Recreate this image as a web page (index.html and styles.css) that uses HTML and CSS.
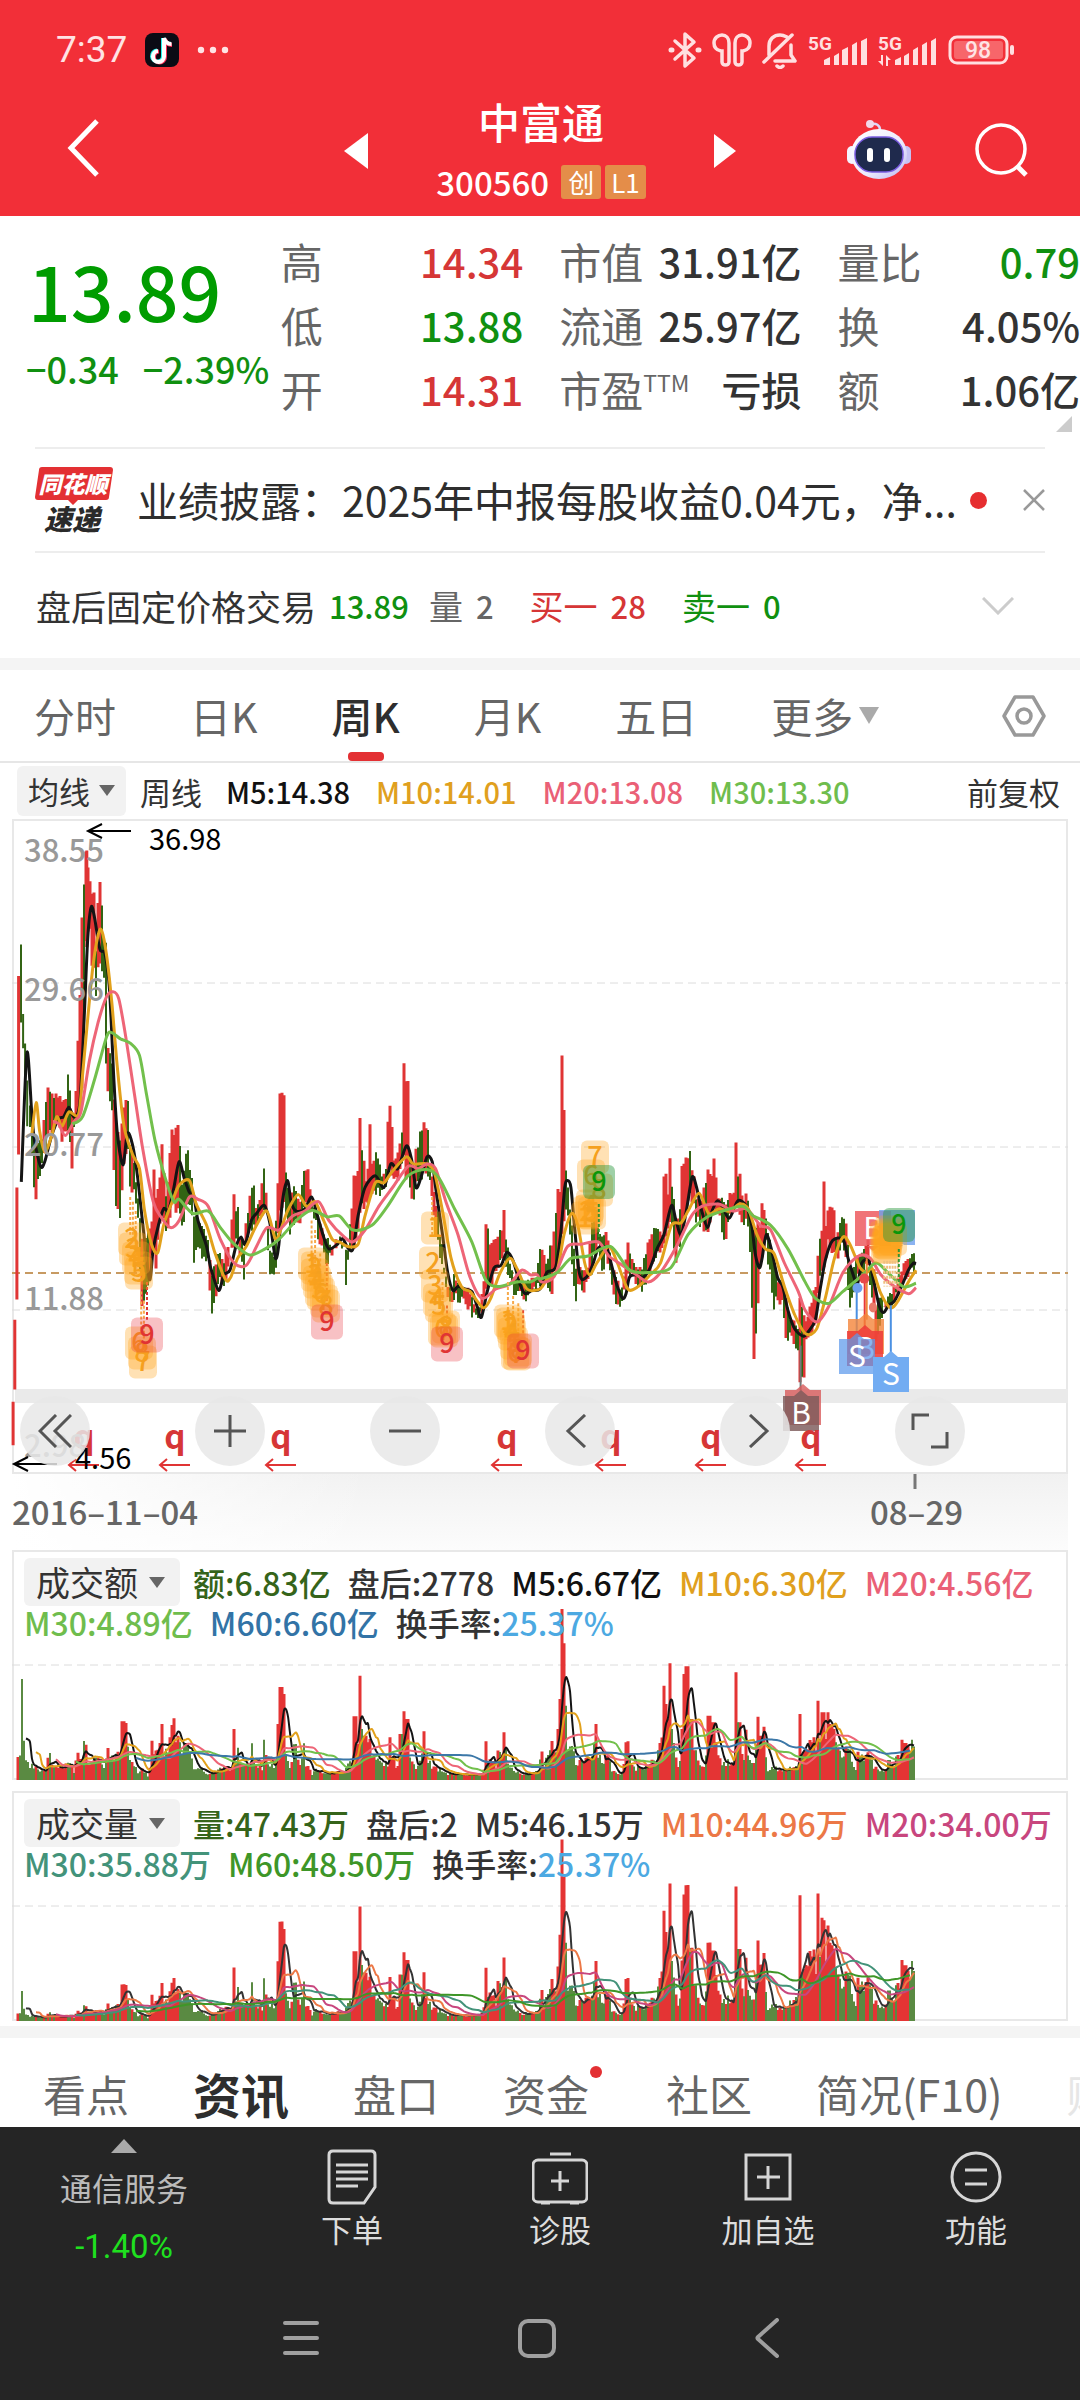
FILE: index.html
```html
<!DOCTYPE html>
<html lang="zh-CN">
<head>
<meta charset="utf-8">
<meta name="viewport" content="width=device-width, initial-scale=1">
<title>中富通 300560</title>
<link rel="stylesheet" href="styles.css">
</head>
<body>
<header class="top">
  <div class="status">
    <span class="clock">7:37</span>
    <svg class="ic" width="34" height="34" viewBox="0 0 34 34"><rect width="34" height="34" rx="8" fill="#0b0b14"/><g fill="none" stroke-width="4"><path d="M18 5v18a5.500 5.500 0 1 1-6-5.500M18 5c1 4 4 6 8 6" stroke="#25f4ee"/><path d="M20 6v18a5.500 5.500 0 1 1-6-5.500M20 6c1 4 4 6 7 6" stroke="#fe2c55"/><path d="M19 5v18.500a5.500 5.500 0 1 1-6-5.500M19 5c1 4 4 6 7.500 6" stroke="#fff"/></g></svg>
    <svg class="ic" width="32" height="8" viewBox="0 0 32 8" fill="#ffe3e4"><circle cx="4" cy="4" r="3.200"/><circle cx="16" cy="4" r="3.200"/><circle cx="28" cy="4" r="3.200"/></svg>
    <div class="status-right">
      <svg class="ic" width="34" height="38" viewBox="0 0 34 38" fill="none" stroke="#ffdfe0" stroke-width="3.500" stroke-linejoin="round" stroke-linecap="round"><path d="M7 10l19 17-9 8V3l9 8L7 28"/><path d="M3 19h1M30 19h1" stroke-width="5"/></svg>
      <svg class="ic" width="40" height="36" viewBox="0 0 40 36" fill="none" stroke="#ffdfe0" stroke-width="3.500"><path d="M9 19C4 18 2 15 2 11c0-5 4-8 8-8s7 3 7 8v19c0 4-7 4-7 0V19zM31 19c5-1 7-4 7-8 0-5-4-8-8-8s-7 3-7 8v19c0 4 7 4 7 0V19z"/></svg>
      <svg class="ic" width="36" height="38" viewBox="0 0 36 38" fill="none" stroke="#ffdfe0" stroke-width="3.500" stroke-linecap="round" stroke-linejoin="round"><path d="M7 24V15C7 8 12 4 18 4c3 0 5 1 7 2M29 14v10l4 6H13M2 31L30 4"/><path d="M15 35c2 2 4 2 6 0"/></svg>
      <svg class="ic" width="60" height="34" viewBox="0 0 60 34" fill="#ffdfe0"><text class="g5" x="0" y="17">5G</text><path d="M16 27l6-3v8h-6zM26 23l5-3v12h-5zM34 17l6-3v18h-6zM44 12l5-3v23h-5zM53 8l6-3v27h-6z"/></svg>
      <svg class="ic" width="60" height="34" viewBox="0 0 60 34" fill="#ffdfe0"><text class="g5" x="0" y="17">5G</text><path d="M17 27l6-3v8h-6zM26 23l5-3v12h-5zM35 17l5-3v18h-5zM44 12l5-3v23h-5zM53 8l5-3v27h-5zM3 22h2v11l-5-5h3zM8 33V22l5 5h-3v6z"/></svg>
      <svg class="ic" width="68" height="30" viewBox="0 0 68 30"><rect x="2" y="2" width="57" height="26" rx="7" fill="none" stroke="#ffdfe0" stroke-width="3"/><rect x="6" y="6" width="49" height="18" rx="3" fill="#f7666a"/><rect x="62" y="10" width="4" height="10" rx="2" fill="#ffdfe0"/><text class="batt" x="30" y="23">98</text></svg>
    </div>
  </div>
  <nav class="title-bar">
    <div class="bar-left"><button class="plain" aria-label="返回"><svg class="ic" width="34" height="60" viewBox="0 0 34 60" fill="none" stroke="#fff" stroke-width="5"><path d="M31 3L5 30l26 27"/></svg></button></div>
    <div class="bar-mid">
      <button class="plain" aria-label="上一只"><svg class="ic" width="24" height="36" viewBox="0 0 24 36" fill="#fff"><path d="M24 0v36L0 18z"/></svg></button>
      <div class="name">
        <h1>中富通</h1>
        <div class="code"><span>300560</span><span class="tag">创</span><span class="tag">L1</span></div>
      </div>
      <button class="plain" aria-label="下一只"><svg class="ic" width="22" height="34" viewBox="0 0 22 34" fill="#fff"><path d="M0 0v34l22-17z"/></svg></button>
    </div>
    <div class="bar-right">
      <button class="plain" aria-label="助手"><svg class="ic" width="64" height="60" viewBox="0 0 64 60">
        <defs><linearGradient id="hd" x1="0" y1="0" x2="1" y2="1"><stop offset="0" stop-color="#fff"/><stop offset=".6" stop-color="#eceafc"/><stop offset="1" stop-color="#b9b4f0"/></linearGradient></defs>
        <path d="M24 4c5-1 9 1 9 6" fill="none" stroke="#dcd9fa" stroke-width="2.500"/><circle cx="23" cy="4" r="4" fill="#f2d8ea"/>
        <rect x="0" y="26" width="10" height="18" rx="5" fill="#f5f3ff"/><rect x="54" y="26" width="10" height="18" rx="5" fill="#c6c2f4"/>
        <ellipse cx="32" cy="34" rx="28" ry="25" fill="url(#hd)"/>
        <rect x="8" y="17" width="48" height="35" rx="17" fill="#1f2a4d" stroke="#7a5ce0" stroke-width="1.500"/>
        <rect x="20" y="28" width="6" height="14" rx="3" fill="#fff"/><rect x="37" y="28" width="6" height="14" rx="3" fill="#fff"/></svg></button>
      <button class="plain" aria-label="搜索"><svg class="ic" width="54" height="56" viewBox="0 0 54 56" fill="none" stroke="#fff" stroke-width="3.500"><circle cx="26" cy="27" r="24"/><path d="M42 44l9 9" stroke-width="5"/></svg></button>
    </div>
  </nav>
</header>

<main>
  <section class="quote">
    <div class="price">
      <div class="last">13.89</div>
      <div class="chg"><span>−0.34</span><span>−2.39%</span></div>
    </div>
    <dl class="stats">
      <div><dt>高</dt><dd class="red">14.34</dd></div>
      <div><dt>市值</dt><dd>31.91亿</dd></div>
      <div><dt>量比</dt><dd class="green">0.79</dd></div>
      <div><dt>低</dt><dd class="green">13.88</dd></div>
      <div><dt>流通</dt><dd>25.97亿</dd></div>
      <div><dt>换</dt><dd>4.05%</dd></div>
      <div><dt>开</dt><dd class="red">14.31</dd></div>
      <div><dt>市盈<sup>TTM</sup></dt><dd>亏损</dd></div>
      <div><dt>额</dt><dd>1.06亿</dd></div>
    </dl>
    <svg class="corner" width="16" height="16" viewBox="0 0 16 16"><path d="M16 0v16H0z" fill="#ccc"/></svg>
  </section>

  <section class="news">
    <svg class="ic" width="78" height="66" viewBox="0 0 78 66"><path d="M7 0h68q3 0 3 3l-4 27q0 3-3 3H43l-5 5-5-5H3q-3 0-3-3L4 3q0-3 3-3z" fill="#e33033"/><text class="logo1" x="38" y="26">同花顺</text><text class="logo2" x="37" y="63">速递</text></svg>
    <a href="#news">业绩披露：2025年中报每股收益0.04元，净...</a>
    <i class="dot"></i>
    <button class="plain close" aria-label="关闭"><svg class="ic" width="22" height="22" viewBox="0 0 22 22" stroke="#999" stroke-width="2.500"><path d="M1 1l20 20M21 1L1 21"/></svg></button>
  </section>

  <section class="after">
    <span>盘后固定价格交易</span><b class="green">13.89</b>
    <span class="grp gray">量 <b>2</b></span>
    <span class="grp red">买一 <b>28</b></span>
    <span class="grp green">卖一 <b>0</b></span>
    <button class="plain more" aria-label="展开"><svg class="ic" width="32" height="18" viewBox="0 0 32 18" fill="none" stroke="#ccc" stroke-width="3"><path d="M1 1l15 15L31 1"/></svg></button>
  </section>

  <nav class="periods">
    <button>分时</button><button>日K</button><button class="on">周K</button><button>月K</button><button>五日</button>
    <button class="drop">更多<svg class="ic" width="20" height="17" viewBox="0 0 20 17" fill="#aaa"><path d="M0 0h20L10 17z"/></svg></button>
    <button class="gear" aria-label="设置"><svg class="ic" width="44" height="42" viewBox="0 0 44 42" fill="none" stroke="#999" stroke-width="3.500" stroke-linejoin="round"><path d="M13 2h18l11 19-11 19H13L2 21z"/><circle cx="22" cy="21" r="7"/></svg></button>
  </nav>

  <section class="legend">
    <label class="pick"><select aria-label="主图指标"><option>均线</option></select></label>
    <span class="dark">周线</span>
    <b class="c-k">M5:14.38</b><b class="c-o">M10:14.01</b><b class="c-p">M20:13.08</b><b class="c-g">M30:13.30</b>
    <a class="fq" href="#adjust">前复权</a>
  </section>

  <section class="kline">
    <svg id="kline" class="chart" viewBox="0 819 1080 731">
      <defs><linearGradient id="strip" x1="0" x2="0" y1="0" y2="1"><stop offset="0" stop-color="#f1f1f1"/><stop offset="1" stop-color="#fcfcfc"/></linearGradient>
      <linearGradient id="fade"><stop offset="0" stop-color="#fff"/><stop offset="1" stop-color="#fff" stop-opacity="0"/></linearGradient></defs>
      <rect x="12" y="1473" width="1056" height="77" fill="url(#strip)"/>
      <rect x="12" y="1473" width="360" height="77" fill="url(#fade)"/>
      <rect x="13" y="820" width="1054" height="653" fill="#fff" stroke="#e8e8e8" stroke-width="2"/>
      <g stroke="#dcdcdc" stroke-dasharray="8 5"><path d="M12 983h1056M12 1147h1056M12 1310h1056"/></g>
      <path d="M12 1273h1056" stroke="#c79a62" stroke-width="2" stroke-dasharray="8 5"/>
      <path d="M15 1396h1053" stroke="#eaeaea" stroke-width="14"/>
      <g id="candles"></g>
      <g id="averages" fill="none" stroke-width="3" stroke-linejoin="round"></g>
      <g id="counts"></g>
      <g class="axis"><text x="24" y="862">38.55</text><text x="24" y="1001">29.66</text><text x="24" y="1156">20.77</text><text x="24" y="1310">11.88</text><text x="24" y="1457">2.98</text></g>
      <g class="ext"><text x="149" y="850">36.98</text><text x="75" y="1469">4.56</text></g>
      <path d="M131 831H88M102 824l-14 7 14 7M57 1464H14M28 1457l-14 7 14 7" fill="none" stroke="#000" stroke-width="2"/>
      <path d="M915 1474v15" stroke="#777" stroke-width="3"/>
      <g class="date"><text x="12" y="1525">2016–11–04</text><text x="870" y="1525">08–29</text></g>
    </svg>
    <div class="tools">
      <button aria-label="最早"><svg class="ic" width="34" height="34" viewBox="0 0 34 34"><path d="M18 1L2 17l16 16M33 1L17 17l16 16"/></svg></button>
      <button aria-label="放大"><svg class="ic" width="34" height="34" viewBox="0 0 34 34"><path d="M17 1v32M1 17h32"/></svg></button>
      <button aria-label="缩小"><svg class="ic" width="34" height="34" viewBox="0 0 34 34"><path d="M1 17h32"/></svg></button>
      <button aria-label="左移"><svg class="ic" width="34" height="34" viewBox="0 0 34 34"><path d="M22 1L5 17l17 16"/></svg></button>
      <button aria-label="右移"><svg class="ic" width="34" height="34" viewBox="0 0 34 34"><path d="M12 1l17 16-17 16"/></svg></button>
      <button aria-label="全屏"><svg class="ic" width="38" height="36" viewBox="0 0 38 36"><path d="M2 17V2h16M36 19v15H20"/></svg></button>
    </div>
  </section>

  <section class="sub">
    <svg id="amount" class="chart" viewBox="0 0 1080 230"></svg>
    <div class="readout">
      <div><label class="pick wide"><select aria-label="副图一"><option>成交额</option></select></label><b class="c-dg">额:6.83亿</b><b class="c-d">盘后:2778</b><b class="c-k">M5:6.67亿</b><b class="c-o">M10:6.30亿</b><b class="c-p">M20:4.56亿</b></div>
      <div><b class="c-g">M30:4.89亿</b><b class="c-b">M60:6.60亿</b><b class="c-d">换手率:<span class="c-s">25.37%</span></b></div>
    </div>
  </section>
  <section class="sub">
    <svg id="volume" class="chart" viewBox="0 0 1080 230"></svg>
    <div class="readout">
      <div><label class="pick wide"><select aria-label="副图二"><option>成交量</option></select></label><b class="c-dg">量:47.43万</b><b class="c-d">盘后:2</b><b class="c-d">M5:46.15万</b><b class="c-or">M10:44.96万</b><b class="c-m">M20:34.00万</b></div>
      <div><b class="c-t">M30:35.88万</b><b class="c-gr">M60:48.50万</b><b class="c-d">换手率:<span class="c-s">25.37%</span></b></div>
    </div>
  </section>

  <nav class="tabs">
    <a href="#view">看点</a><a href="#info" class="on">资讯</a><a href="#book">盘口</a><a href="#fund" class="badge">资金</a><a href="#club">社区</a><a href="#f10">简况(F10)</a><a href="#fin" class="faint">财务</a>
  </nav>
</main>

<footer>
  <div class="actions">
    <button class="sector"><svg class="ic" width="26" height="14" viewBox="0 0 26 14" fill="#aaa"><path d="M13 0l13 14H0z"/></svg><span>通信服务</span><span class="pct">-1.40%</span></button>
    <button><svg class="ic" width="56" height="56" viewBox="0 0 56 56"><path d="M9 2h38q4 0 4 4v32L40 54H9q-4 0-4-4V6q0-4 4-4z"/><path d="M12 16h32M12 23h32M12 30h32M12 37h22"/></svg><span>下单</span></button>
    <button><svg class="ic" width="56" height="56" viewBox="0 0 56 56"><rect x="1" y="11" width="54" height="42" rx="5"/><path d="M18 5h21M28 22v20M19 32h18M9 54h9M38 54h9"/></svg><span>诊股</span></button>
    <button><svg class="ic" width="56" height="56" viewBox="0 0 56 56"><path d="M6 6h44v44H6zM28 17v23M17 28h23"/></svg><span>加自选</span></button>
    <button><svg class="ic" width="56" height="56" viewBox="0 0 56 56"><circle cx="28" cy="28" r="24"/><path d="M17 21h22M17 35h22"/></svg><span>功能</span></button>
  </div>
  <div class="sysnav">
    <button class="plain" aria-label="菜单"><svg class="ic" width="38" height="40" viewBox="0 0 38 40" stroke="#a0a0a0" stroke-width="4" stroke-linecap="round"><path d="M3 5h32M3 20h32M3 35h32"/></svg></button>
    <button class="plain" aria-label="主页"><svg class="ic" width="38" height="40" viewBox="0 0 38 40" fill="none" stroke="#a0a0a0" stroke-width="4"><rect x="2" y="3" width="34" height="35" rx="8"/></svg></button>
    <button class="plain" aria-label="后退"><svg class="ic" width="26" height="40" viewBox="0 0 26 40" fill="none" stroke="#a0a0a0" stroke-width="4" stroke-linecap="round" stroke-linejoin="round"><path d="M23 2L4 19q-1 1 0 2l19 17"/></svg></button>
  </div>
</footer>
<script src="charts.js"></script>
</body>
</html>
```
FILE: styles.css
```css
* { box-sizing: border-box; }
body { margin: 0; background: #fff; color: #333; font-family: "Noto Sans CJK SC", "Noto Sans", sans-serif; overflow-x: hidden; }
button { border: 0; background: none; padding: 0; margin: 0; color: inherit; font: inherit; }
a { color: inherit; text-decoration: none; }
b { font-weight: 500; }
.ic, .chart { display: block; flex: none; }
.chart { width: 100%; height: auto; }
.red { color: #d63636; }
.green { color: #109010; }
.gray { color: #666; }

.top { background: #f22f38; color: #fff; padding-bottom: 16px; }
.status { display: flex; align-items: center; height: 100px; padding: 0 64px 0 56px; gap: 18px; }
.clock { font-family: Roboto, sans-serif; font-size: 37px; line-height: 40px; color: #ffe3e4; }
.status-right { display: flex; align-items: center; gap: 10px; margin-left: auto; }
.g5 { font: 700 19px Roboto, sans-serif; }
.batt { font: 500 23px Roboto, sans-serif; fill: #ffe3e4; text-anchor: middle; }
.title-bar { display: grid; grid-template-columns: 1fr auto 1fr; grid-template-rows: 100px; align-items: center; height: 100px; }
.bar-left { padding-left: 66px; }
.bar-mid { display: flex; align-items: center; justify-content: space-between; width: 392px; padding-top: 2px; }
.name { text-align: center; padding-bottom: 8px; }
h1 { margin: 0 0 18px; font-size: 42px; line-height: 52px; font-weight: 500; }
.code { display: flex; align-items: center; gap: 4px; font-size: 33px; line-height: 34px; font-weight: 500; }
.code span:first-child { margin-right: 8px; }
.tag { background: #e48d49; border-radius: 3px; padding: 0 6px; font-size: 26px; font-weight: 400; min-width: 40px; text-align: center; }
.bar-right { display: flex; align-items: center; justify-content: flex-end; gap: 64px; padding-right: 51px; }

.quote { position: relative; display: grid; grid-template-columns: 26fr 74fr; height: 231px; }
.price { padding: 28px 0 0 26px; color: #109010; white-space: nowrap; }
.last { font-size: 75px; line-height: 92px; font-weight: 500; color: #009c00; padding-left: 2px; margin-bottom: 4px; }
.chg { display: flex; gap: 24px; font-size: 36px; line-height: 56px; font-weight: 500; }
.stats { display: grid; grid-template-columns: repeat(3, 1fr); column-gap: 36px; grid-auto-rows: 64px; margin: 0; padding-top: 13px; }
.stats div { display: flex; justify-content: space-between; line-height: 64px; white-space: nowrap; }
.stats dt { font-size: 42px; color: #666; }
.stats dd { margin: 0; font-size: 40px; font-weight: 500; }
.stats dd:not([class]) { color: #333; }
.stats sup { font-size: 23px; line-height: 20px; }
.corner { position: absolute; right: 8px; bottom: 15px; }

.news { display: flex; align-items: center; height: 106px; margin: 0 35px; border-top: 2px solid #ededed; border-bottom: 2px solid #ededed; font-size: 41px; }
.logo1 { font-size: 23px; font-weight: 900; font-style: italic; text-anchor: middle; fill: #fff; }
.logo2 { font-size: 28px; font-weight: 900; font-style: italic; text-anchor: middle; fill: #2a2a2a; }
.news a { margin-left: 24px; color: #2e2e2e; white-space: nowrap; line-height: 50px; padding-bottom: 2px; }
.dot { width: 17px; height: 17px; border-radius: 50%; background: #e62e30; margin-left: auto; }
.close { margin-left: 36px; }

.after { display: flex; align-items: center; height: 105px; padding: 0 66px 0 36px; font-size: 34px; white-space: nowrap; }
.after > span:first-child { font-size: 35px; }
.after b { font-size: 31px; }
.after > b { margin-left: 13px; margin-right: 20px; }
.grp { display: flex; align-items: center; gap: 13px; margin-right: 36px; }
.more { margin-left: auto; }

.periods { display: flex; align-items: center; gap: 74px; height: 105px; padding: 0 34px; border-top: 12px solid #f4f4f4; border-bottom: 2px solid #e6e6e6; font-size: 41px; color: #666; }
.periods button { line-height: 91px; }
.periods .on { position: relative; color: #2e2e2e; font-weight: 500; }
.periods .on::after { content: ""; position: absolute; left: 50%; bottom: 0; width: 36px; height: 9px; margin-left: -18px; border-radius: 4px; background: #e33033; }
.drop { display: flex; align-items: center; gap: 6px; }
.periods .gear { margin-left: auto; }

.legend { display: flex; align-items: center; height: 56px; padding: 0 20px 0 17px; font-size: 29px; white-space: nowrap; gap: 26px; }
.legend .dark, .fq { font-size: 31px; color: #333; }
.legend .dark { margin-left: -12px; margin-right: -2px; }
.fq { margin-left: auto; }
.pick { position: relative; display: block; width: 109px; height: 50px; background: #f2f2f2; border-radius: 6px; }
.pick select { display: block; appearance: none; border: 0; background: none; width: 100%; height: 100%; padding: 0 0 0 11px; margin: 0; font: inherit; font-size: 31px; line-height: 46px; color: #333; }
.pick::after { content: ""; position: absolute; right: 11px; top: 19px; border: 8px solid transparent; border-top: 11px solid #666; border-bottom: 0; }
.c-k { color: #111; } .c-o { color: #e0a01e; } .c-p { color: #ea6076; } .c-g { color: #6fbd4d; } .c-b { color: #3273a6; }
.c-d { color: #333; } .c-dg { color: #35641a; } .c-s { color: #4ca9e2; } .c-or { color: #ec7846; } .c-m { color: #c8467e; }
.c-t { color: #43937a; } .c-gr { color: #3e9628; }

.kline { position: relative; }
.axis { font-size: 31px; font-weight: 500; fill: #999; }
.ext { font-size: 29px; fill: #000; }
.date { font-size: 33px; fill: #666; font-weight: 500; }
.tools { position: absolute; left: 20px; right: 115px; top: 577px; display: flex; justify-content: space-between; }
.tools button { width: 70px; height: 70px; border-radius: 50%; background: rgba(232, 232, 232, .85); display: flex; align-items: center; justify-content: center; }
.tools path { fill: none; stroke: #555; stroke-width: 3; }
.td { font-size: 27px; text-anchor: middle; font-weight: 500; }
.bs { font-size: 30px; text-anchor: middle; fill: #fff; }
.q { font-size: 33px; text-anchor: middle; font-weight: 700; fill: #d63636; }

.sub { position: relative; height: 230px; margin-bottom: 11px; }
.sub .chart { position: absolute; left: 0; top: 0; }
.readout { position: relative; padding: 11px 0 0 24px; font-size: 32px; line-height: 38px; white-space: nowrap; }
.readout div { display: flex; gap: 17px; }
.readout div:first-child { height: 42px; align-items: center; }
.readout .pick { width: 156px; height: 48px; margin-right: -4px; }
.readout .pick select { font-size: 34px; padding-left: 12px; }
.readout .pick::after { right: 15px; }

.tabs { display: flex; align-items: center; gap: 64px; height: 101px; margin-top: -6px; padding: 21px 0 0 43px; border-top: 12px solid #f4f4f4; font-size: 43px; line-height: 66px; color: #666; white-space: nowrap; overflow: hidden; }
.tabs .on { font-size: 48px; font-weight: 700; color: #2e2e2e; }
.tabs .badge { position: relative; padding-right: 13px; }
.badge::after { content: ""; position: absolute; right: 0; top: 6px; width: 12px; height: 12px; border-radius: 50%; background: #e33033; }
.tabs .faint { color: #e6e6e6; }

footer { background: #252525; color: #ddd; height: 273px; }
.actions { display: grid; grid-template-columns: 248fr 208fr 208fr 208fr 208fr; height: 154px; }
.actions button { display: flex; flex-direction: column; align-items: center; padding-top: 22px; font-size: 31px; line-height: 40px; }
.actions button > span { margin-top: 4px; }
.actions .ic { fill: none; stroke: #d6d6d6; stroke-width: 3; }
.actions .sector { padding-top: 12px; font-size: 32px; color: #bbb; }
.sector .ic { fill: #aaa; stroke: none; }
.actions .sector span { margin-top: 14px; }
.actions .sector .pct { font-family: Roboto, sans-serif; font-size: 33px; color: #1fe01f; margin-top: 20px; }
.sysnav { display: flex; justify-content: center; align-items: center; gap: 198px; height: 114px; padding-right: 18px; }
```
FILE: charts.js
```js
// Survey units: half a chart is 1568 units wide; points after "R" belong to the right half.
const HALF = 1568, UX = 2.904, UY = 2.119;
const px = u => u / UX, py = u => 810 + u / UY;
function parse(text) {
  const out = [];
  text.split('R').forEach((part, half) => part.trim().split(/\s*;\s*/).filter(Boolean).forEach(item => {
    const n = item.split(/[:,]/).map(Number);
    n[0] += half * HALF;
    out.push(n);
  }));
  return out.sort((a, b) => a[0] - b[0]);
}
function at(points, x, k) {
  let i = 1;
  while (i < points.length - 1 && points[i][0] < x) i++;
  const a = points[i - 1], b = points[i];
  const t = Math.max(0, Math.min(1, (x - a[0]) / (b[0] - a[0])));
  return a[k] + (b[k] - a[k]) * t;
}
// A bar takes the surveyed value itself when one lies on it, so that spikes keep their height.
function snap(points, x, k) {
  let best = null;
  for (const p of points) if (Math.abs(p[0] - x) < 3.1 && (!best || Math.abs(p[0] - x) < Math.abs(best[0] - x))) best = p;
  return best ? best[k] : at(points, x, k);
}
const noise = n => { const s = Math.sin(n * 127.1 + 11.7) * 43758.5453; return s - Math.floor(s); };
function curve(p) {
  let d = `M${p[0][0].toFixed(1)} ${p[0][1].toFixed(1)}`;
  for (let i = 0; i < p.length - 1; i++) {
    const a = p[i - 1] || p[i], b = p[i], c = p[i + 1], e = p[i + 2] || c;
    d += `C${[b[0] + (c[0] - a[0]) / 7, b[1] + (c[1] - a[1]) / 7, c[0] - (e[0] - b[0]) / 7, c[1] - (e[1] - b[1]) / 7, c[0], c[1]].map(v => v.toFixed(1)).join(' ')}`;
  }
  return d;
}

const range = parse(`85:625,690;90:640,740;98:680,800;101:690,858;108:700,800;120:690,765;140:583,710;150:598,690;160:598,670;172:602,680;182:610,715;190:605,690;200:560,690;206:583,720;211:640,770;217:640,680;228:480,660;240:219,600;246:155,480;252:88,290;258:112,270;264:148,260;270:170,350;278:290,400;287:187,340;293:148,330;300:260,360;308:270,550;316:495,600;325:530,650;335:650,840;350:690,885;360:620,750;370:610,730;380:700,810;390:740,820;400:820,880;412:900,1060;422:900,1030;434:880,1000;440:870,960;445:755,930;451:820,940;455:820,980;462:770,890;472:702,870;480:810,900;490:785,890;497:670,850;502:622,840;508:680,850;514:665,860;520:705,870;530:785,890;543:717,850;556:770,860;566:850,965;575:870,930;590:880,960;605:900,970;613:980,1075;625:960,1050;637:930,1010;650:950,1020;660:915,985;670:930,960;677:805,930;683:840,920;690:840,920;700:900,960;706:930,1003;715:870,920;728:810,890;736:790,900;745:835,890;755:820,880;765:758,860;772:800,870;782:930,990;794:940,997;803:870,980;810:780,900;816:590,850;823:600,850;828:760,870;840:810,900;855:795,880;870:820,880;885:762,850;893:760,850;905:820,860;915:840,880;925:860,920;940:890,950;950:900,970;965:920,945;985:900,930;997:910,940;1002:930,1025;1010:930,960;1020:840,930;1030:770,930;1037:760,900;1043:650,860;1052:710,850;1065:780,850;1071:760,840;1077:660,830;1083:740,820;1090:715,820;1110:765,820;1122:760,800;1128:650,780;1135:618,770;1143:740,800;1155:720,790;1166:680,770;1176:525,740;1182:568,790;1190:720,820;1200:760,845;1210:715,800;1222:680,790;1234:660,780;1242:668,790;1250:750,800;1260:800,860;1270:850,930;1280:890,970;1290:960,1000;1300:1000,1050;1310:1010,1060;1320:980,1040;1340:1010,1050;1360:1010,1060;1375:1040,1085;1390:1060,1088;1400:1020,1070;1408:990,1040;1413:874,1030;1425:910,1020;1440:900,980;1455:890,960;1461:846,950;1470:900,970;1480:950,1000;1495:980,1030;1510:1000,1040;1525:990,1060;1540:990,1030;1555:990,1020;1568:920,1025
R20:950,1010;32:920,1030;40:890,990;55:798,960;61:800,950;66:512,900;72:626,880;78:760,860;85:840,900;95:880,980;102:960,1062;110:950,1020;125:970,1030;140:960,1010;150:870,1000;160:840,940;170:880,930;182:900,990;192:885,950;200:910,980;210:960,1010;220:980,1050;235:1010,1070;245:980,1020;255:914,1000;265:940,1000;280:960,1005;295:970,1032;305:940,1020;317:905,990;330:880,970;345:885,950;357:890,940;363:765,920;370:810,900;375:800,890;380:726,880;386:790,900;393:860,970;400:860,940;408:840,940;414:748,900;425:735,850;438:716,830;444:755,840;455:820,880;470:820,890;480:780,900;490:760,915;500:765,860;508:738,840;515:820,870;525:815,880;537:830,930;550:810,870;566:810,850;572:700,850;578:770,860;590:830,880;600:805,870;612:850,950;618:880,1060;624:880,1178;631:870,1060;638:880,980;647:828,960;655:860,930;668:910,990;677:940,1065;690:990,1040;705:1000,1060;715:1030,1130;725:1070,1120;740:1080,1135;751:1090,1160;757:1030,1225;765:1060,1215;771:1080,1135;785:1050,1120;800:1000,1100;812:900,1000;817:890,990;822:783,980;828:880,960;838:840,920;852:840,950;862:900,960;875:860,930;890:870,950;897:920,1030;903:960,1062;912:960,1030;922:940,1000;935:930,990;950:910,980;958:950,1010;968:970,1060;975:1050,1145;985:1030,1100;992:1020,1080;1000:1040,1070;1015:1020,1060;1030:1010,1050;1045:980,1020;1060:950,1000;1080:938,980;1092:940,995`);

const averages = [
  ['#141414', `62,788;78,515;92,640;100,700;118,755;130,745;150,690;170,655;185,650;200,630;215,650;232,620;245,430;255,270;265,205;275,230;290,295;305,305;318,380;330,560;340,680;357,752;370,685;385,710;400,780;415,880;434,995;445,930;460,880;475,845;490,848;505,800;520,745;535,780;550,810;562,815;575,870;600,925;612,970;635,1018;650,985;668,975;685,925;700,905;712,920;730,870;745,855;768,838;785,880;800,950;810,920;820,830;835,785;845,830;860,850;885,845;905,820;920,855;940,905;955,930;980,920;995,908;1010,928;1025,930;1040,860;1060,800;1090,775;1115,800;1135,750;1155,760;1180,712;1195,740;1208,800;1222,780;1240,735;1255,745;1265,800;1285,900;1300,980;1315,1018;1330,1010;1350,1015;1370,1020;1385,1050;1398,1075;1415,1020;1435,970;1455,965;1472,937;1490,955;1510,1005;1525,1025;1545,1018;1568,1015R20,980;45,970;60,900;72,800;80,785;90,800;100,880;112,970;122,995;140,985;155,960;168,930;182,925;195,930;210,970;225,1010;240,1035;250,1025;260,990;280,985;300,990;320,970;340,930;360,900;382,838;395,870;410,900;425,850;442,778;455,800;470,850;487,885;500,850;515,828;530,840;550,865;575,828;600,840;615,880;625,940;637,970;645,950;657,900;672,930;690,990;705,1010;720,1060;740,1100;765,1115;780,1105;800,1080;815,1010;830,950;850,912;880,910;895,950;912,990;922,1005;935,960;955,955;970,1000;985,1050;998,1065;1012,1050;1030,1040;1050,1010;1070,975;1085,960;1092,962`],
  ['#e2a11c', `92,690;105,620;115,680;130,725;150,690;165,650;180,670;200,640;228,645;240,560;255,440;270,330;285,265;295,255;310,310;325,410;340,540;360,670;385,730;405,760;420,850;440,920;458,938;475,880;500,830;520,795;550,785;570,835;600,880;625,940;655,995;670,990;690,950;715,925;745,880;775,850;800,910;815,890;835,850;865,815;890,840;915,830;940,870;965,910;985,915;1010,925;1040,920;1060,860;1090,790;1115,790;1140,765;1180,735;1200,750;1240,750;1262,770;1285,850;1310,950;1340,1010;1365,1020;1385,1040;1405,1055;1425,1035;1450,985;1480,950;1500,970;1530,1015;1568,1015R20,995;50,975;70,900;92,855;110,880;130,960;145,985;165,960;200,925;225,960;255,1015;285,1010;320,985;350,960;382,880;410,875;430,850;462,812;490,855;520,845;550,850;580,835;605,845;630,900;655,930;680,940;710,1010;740,1070;772,1110;803,1100;830,1030;855,950;880,905;900,920;930,970;950,980;965,972;990,1025;1018,1055;1040,1040;1070,1000;1092,975`],
  ['#ee6577', `155,660;170,665;190,690;215,660;235,640;260,530;285,450;310,395;328,385;345,400;365,480;390,600;415,720;445,830;470,865;495,885;520,870;550,820;575,825;605,840;640,910;680,960;715,965;745,925;775,885;810,890;850,860;885,850;925,830;955,870;1000,905;1025,915;1060,890;1100,840;1140,800;1185,755;1215,760;1240,750;1265,760;1295,830;1330,900;1365,990;1400,1035;1440,1015;1480,1005;1515,975;1540,985;1560,985R5,1000;40,990;80,925;120,920;170,915;200,945;240,965;280,985;315,1000;350,980;400,920;440,860;470,840;520,835;560,850;600,845;640,880;670,890;710,960;750,1020;770,1060;805,1085;840,1050;880,980;925,945;960,950;990,985;1030,1010;1070,1025;1092,1012`],
  ['#72c04c', `210,665;240,650;275,570;310,480;325,472;350,485;380,495;405,520;425,600;450,700;480,780;505,830;520,825;560,855;605,850;640,885;680,920;725,943;770,930;810,910;860,870;905,848;950,862;985,860;1025,890;1080,880;1125,840;1185,775;1240,762;1275,780;1320,845;1370,915;1410,995;1445,1010;1500,1000;1540,1000;1560,992R5,993;50,980;90,950;140,945;205,925;260,975;320,980;380,970;430,900;480,865;530,850;590,840;620,860;670,880;720,930;770,1000;800,1035;840,1045;880,1020;930,990;975,960;1010,980;1055,1010;1092,1003`]
].map(([color, text]) => [color, parse(text)]);

const turnover = parse(`50:60;57:60;61:300;67:115;73:70;85:40;100:35;125:25;136:30;142:78;155:45;170:35;185:35;200:55;215:20;228:80;240:70;247:98;255:40;270:50;285:60;300:30;315:75;330:65;340:100;350:80;357:173;364:168;370:100;385:50;400:20;415:25;430:10;438:40;443:95;449:70;460:80;467:108;473:165;479:90;490:85;497:162;503:182;509:110;518:130;530:80;543:105;555:70;565:35;580:40;595:20;610:15;630:25;650:40;671:30;677:150;683:60;688:105;700:50;723:40;729:107;735:50;759:35;765:118;771:90;777:40;795:35;803:60;809:165;816:276;822:255;828:80;840:35;848:60;857:105;865:50;879:50;885:107;890:50;905:15;915:25;930:20;960:18;1000:20;1020:60;1025:60;1031:188;1037:90;1043:310;1048:333;1054:150;1060:130;1066:110;1072:120;1080:80;1095:50;1110:50;1126:40;1132:125;1138:70;1150:40;1157:50;1163:135;1170:135;1176:203;1182:180;1188:60;1200:40;1215:40;1228:80;1234:143;1240:60;1255:40;1275:30;1300:15;1340:15;1370:12;1395:12;1408:30;1414:113;1420:60;1443:40;1449:83;1455:60;1461:140;1467:80;1480:40;1500:20;1520:15;1545:18;1560:20;1568:70R3:70;10:35;25:80;38:92;45:80;50:150;55:290;60:240;65:510;71:407;78:220;84:100;95:100;107:40;120:50;135:70;150:80;155:100;160:165;166:80;180:60;195:60;210:30;225:15;240:18;246:40;251:110;258:113;264:60;280:30;300:30;320:40;334:60;345:100;357:100;363:280;369:225;374:180;380:347;386:150;393:60;400:30;408:70;414:150;420:315;427:338;433:180;440:180;447:90;460:50;475:30;485:60;491:190;497:170;503:170;509:110;516:60;530:50;550:50;566:50;572:320;578:170;584:60;595:60;601:148;607:60;620:40;630:100;636:187;642:130;648:157;655:80;665:30;680:30;700:30;720:30;740:30;752:35;758:195;764:80;775:90;790:110;797:125;804:90;810:235;816:120;822:200;828:120;834:120;839:200;845:165;852:150;860:110;880:85;895:100;905:60;915:30;922:80;935:70;945:60;950:100;956:60;970:40;985:25;1000:20;1010:50;1030:40;1037:60;1048:60;1054:118;1060:108;1068:98;1080:95;1090:90`);
const turnoverToVolume = parse(`50:.29;200:.3;357:.62;503:.69;677:1.05;1048:1.1;1176:1;1350:1;1413:1.4;1500:1.3R0:1.1;100:1.04;380:1.18;700:1.3;758:1.95;839:1.4;950:1.6;1090:1.5`);

// One weekly bar every two pixels, from x = 18 to x = 915. Busy weeks close up.
const weeks = [];
const fast = averages[0][1];
for (let i = 0; i < 449; i++) {
  const x = 18 + i * 2, u = x * UX;
  const slope = at(fast, u + 8, 1) - at(fast, u - 8, 1);
  const h = snap(turnover, u, 1) / 3;
  const amount = h * (h < 35 ? .75 + noise(i + 50) * .5 : 1);
  const before = i ? weeks[i - 1].amount : 0;
  const up = noise(Math.floor(i / 2) + i % 3 * .4) > (slope > 0 ? .7 : .36);
  weeks.push({ x, u, amount, up: i > 0 && i < 8 ? false : amount > 45 ? amount > before * .7 : up });
}

const RED = '#e03434', GREEN = '#326414';
let red = '', green = '';
weeks.filter(w => w.u > 84).forEach((w, i) => {
  const hi = snap(range, w.u, 1) + noise(i + 900) * 12, lo = snap(range, w.u, 2) - noise(i + 300) * 22;
  const d = `M${w.x} ${py(hi).toFixed(1)}V${py(lo).toFixed(1)}`;
  w.up ? red += d : green += d;
});
const v = (u, a, b) => `M${px(u).toFixed(1)} ${py(a).toFixed(1)}V${py(b).toFixed(1)}`;
green += v(61, 285, 450) + v(67, 432, 505) + v(73, 495, 575) + v(79, 573, 670);
red += v(252, 86, 290);
const first = v(54, 352, 730) + v(49, 800, 1037) + v(43, 1080, 1228) + v(38, 1254, 1346);
document.getElementById('candles').innerHTML =
  `<path d="${red}" stroke="${RED}" stroke-width="3"/><path d="${green}" stroke="${GREEN}" stroke-width="2"/><path d="${first}" stroke="${RED}" stroke-width="3"/>`;
document.getElementById('averages').innerHTML = averages.map(([c, pts]) =>
  `<path stroke="${c}" d="${curve(pts.map(p => [px(p[0]), py(p[1])]))}"/>`).join('');

// Count badges, trade flags and dividend marks.
let marks = '';
const badge = (u, y, n, kind) => {
  const [bg, fg, w, h] = { o: ['#ffa51e55', '#f5a01e', 28, 33], r: ['#e8323c4d', '#e03434', 32, 35], g: ['#28963c73', '#0a960a', 32, 34] }[kind];
  const cx = Math.round(px(u)), cy = Math.round(py(y));
  marks += `<rect x="${cx - w / 2}" y="${cy - h / 2}" width="${w}" height="${h}" rx="6" fill="${bg}"/>`;
  if (n) marks += `<text class="td" x="${cx}" y="${cy + 9}" fill="${fg}">${n}</text>`;
};
const stem = (u, a, b, c) => { marks += `<path d="${v(u, a, b)}" stroke="${c}" stroke-width="2" stroke-dasharray="3 2"/>`; };
[[378, 820], [386, 830], [394, 850], [410, 1020], [418, 1040], [905, 870], [915, 890], [930, 940], [1255, 820], [1285, 1000], [1475, 1000], [1490, 1030], [1505, 1045]].forEach(([u, y]) => stem(u, y, y + 80, '#f7a94a'));
[[427, 1000, 1080], [949, 960, 1050], [1298, 1050, 1100], [1519, 1060, 1110]].forEach(([u, a, b]) => stem(u, a, b, RED));
[[384, 908, 2], [386, 930, 3], [396, 950, 4], [400, 970, 5], [404, 982, 5], [403, 1130, 6], [411, 1150, 8], [416, 1170, 7],
 [906, 962, 1], [914, 970, 2], [916, 985, 3], [921, 1000, 4], [927, 1018, 5], [933, 1025, 6], [940, 1040, 7], [947, 1052, 8],
 [1262, 885, 1], [1256, 960, 2], [1264, 1008, 3], [1268, 1038, 4], [1274, 1052, 5], [1284, 1100, 6], [1290, 1104, 7], [1296, 1095, 8],
 [1474, 1082, 1], [1480, 1090, 2], [1484, 1098, 3], [1488, 1110, 4], [1494, 1130, 5], [1496, 1150, 6], [1502, 1153, 7], [1504, 1145, 8]].forEach(m => badge(...m, 'o'));
[[427, 1112], [949, 1084], [1298, 1132], [1518, 1146]].forEach(([u, y]) => badge(u, y, 9, 'r'));
[[HALF + 132, 865, 1], [HALF + 138, 852, 2], [HALF + 142, 850, 3], [HALF + 145, 840, 4], [HALF + 150, 855, 5], [HALF + 148, 775, 6], [HALF + 172, 805, 8], [HALF + 160, 736, 7]].forEach(m => badge(...m, 'o'));
stem(HALF + 171, 835, 910, '#329632');
badge(HALF + 171, 788, 9, 'g');

const solid = (u, a, b, c) => { marks += `<path d="${v(u, a, b)}" stroke="${c}" stroke-width="2"/>`; };
const flag = (u, y, t, bg, up) => {
  const cx = Math.round(px(u)), cy = Math.round(py(y)), e = up ? -1 : 1;
  marks += `<path d="M${cx - 18} ${cy - 17}h36v35h-36zM${cx - 7} ${cy + e * 17}l7 ${e * 6} 7 ${-e * 6}z" fill="${bg}"/>`;
  if (t) marks += `<text class="bs" x="${cx}" y="${cy + 11}">${t}</text>`;
};
solid(HALF + 943, 990, 1100, '#e83838');
solid(HALF + 949, 950, 1080, '#ee8838');
solid(HALF + 920, 1012, 1125, '#4a90e2');
solid(HALF + 1019, 1050, 1155, '#4a90e2');
solid(HALF + 757, 1135, 1230, '#777');
marks += `<ellipse cx="${px(HALF + 922)}" cy="${py(1013)}" rx="5" ry="5" fill="#6ea0ee"/><ellipse cx="${px(HALF + 942)}" cy="${py(993)}" rx="5" ry="5" fill="#e84a4a"/><ellipse cx="${px(HALF + 967)}" cy="${py(1054)}" rx="4" ry="5" fill="#e87a6a"/>`;
flag(HALF + 966, 885, 'B', '#ee5e62dd', false);
flag(HALF + 1036, 884, '', '#6ea0eecc', false);
[[1000, 905], [1002, 925], [1004, 915], [1008, 925], [1010, 908], [1015, 900], [1026, 910], [1012, 918], [1008, 912], [1014, 895]].forEach(([u, y]) => badge(HALF + u, y, '', 'o'));
for (let k = 0; k < 6; k++) stem(HALF + 1000 + k * 8, 955, 1010, '#efbf80');
stem(HALF + 1042, 930, 1000, '#329632');
badge(HALF + 1042, 880, 9, 'g');
flag(HALF + 948, 1115, '', '#f4853acc', true);
flag(HALF + 943, 1140, 'B', '#ee3c38dd', true);
flag(HALF + 920, 1158, 'S', '#5c98ecb8', true);
flag(HALF + 1019, 1195, 'S', '#72acf2', true);
flag(HALF + 764, 1265, '', '#d85a5acc', true);
flag(HALF + 757, 1277, 'B', '#7c5a5ad0', true);
[197, 463, 770, 1427, HALF + 160, HALF + 450, HALF + 740].forEach(u => {
  const x = Math.round(px(u));
  marks += `<text class="q" x="${x + 16}" y="1449">q</text><path d="M${x + 31} 1465H${x + 1}M${x + 8} 1459l-7 6 7 6" fill="none" stroke="${RED}" stroke-width="2"/>`;
});
document.getElementById('counts').innerHTML = marks;

// Turnover and volume panes.
function pane(id, heights, colors, split) {
  const bottom = 229;
  let r = '', g = '';
  weeks.forEach((w, i) => {
    const d = `M${w.x} ${bottom + 1}V${(bottom - heights[i]).toFixed(1)}`;
    w.up ? r += d : g += d;
  });
  let out = `<rect x="13" y="1" width="1054" height="228" fill="#fff" stroke="#e8e8e8" stroke-width="2"/><path d="M12 ${split}h1056" stroke="#dcdcdc" stroke-dasharray="8 5"/><path d="${r}" stroke="#e43434" stroke-width="3"/><path d="${g}" stroke="#5a8a42" stroke-width="2"/>`;
  [5, 10, 20, 30, 60].forEach((n, k) => {
    const pts = [];
    for (let i = n - 1; i < weeks.length; i += n > 10 ? 3 : 1) {
      let s = 0;
      for (let j = 0; j < n; j++) s += heights[i - j];
      pts.push([weeks[i].x, bottom - s / n]);
    }
    out += `<path d="${curve(pts)}" fill="none" stroke="${colors[k]}" stroke-width="2"/>`;
  });
  document.getElementById(id).innerHTML = out;
}
const amounts = weeks.map(w => w.amount);
pane('amount', amounts, ['#141414', '#e2a11c', '#ee6577', '#72c04c', '#3c78a8'], 115);
pane('volume', amounts.map((h, i) => h * at(turnoverToVolume, weeks[i].u, 1)), ['#333', '#ec7846', '#c8467e', '#43937a', '#3e9628'], 115);
```
